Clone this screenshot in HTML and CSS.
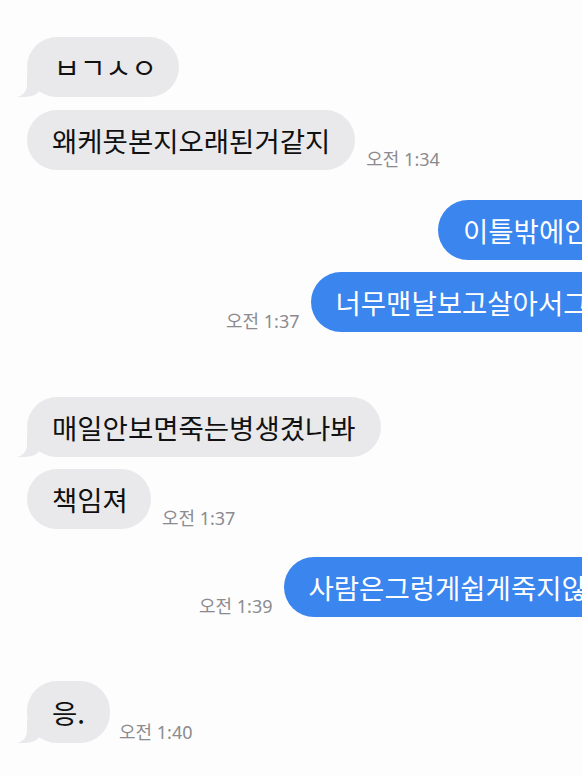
FILE: index.html
```html
<!DOCTYPE html>
<html lang="ko">
<head>
<meta charset="utf-8">
<link rel="stylesheet" href="styles.css">
</head>
<body>
<div class="chat">
  <div class="row in r1"><div class="bubble gray tail jamo">ㅂㄱㅅㅇ</div></div>
  <div class="row in r2"><div class="bubble gray">왜케못본지오래된거같지</div><span class="time">오전 1:34</span></div>
  <div class="row out r3"><div class="bubble blue">이틀밖에안</div></div>
  <div class="row out r4"><span class="time">오전 1:37</span><div class="bubble blue">너무맨날보고살아서그</div></div>
  <div class="row in r5"><div class="bubble gray tail">매일안보면죽는병생겼나봐</div></div>
  <div class="row in r6"><div class="bubble gray">책임져</div><span class="time">오전 1:37</span></div>
  <div class="row out r7"><span class="time">오전 1:39</span><div class="bubble blue">사람은그렁게쉽게죽지않</div></div>
  <div class="row in r8"><div class="bubble gray tail">응.</div><span class="time">오전 1:40</span></div>
</div>
</body>
</html>
```
FILE: styles.css
```css
html, body {
  margin: 0;
  padding: 0;
  background: #fdfdfd;
  overflow: hidden;
  width: 582px;
  height: 776px;
}
.chat {
  display: flex;
  flex-direction: column;
  padding-top: 37px;
  font-family: "Noto Sans CJK KR", "Noto Sans", sans-serif;
}
.row {
  display: flex;
  align-items: flex-end;
  gap: 11px;
  white-space: nowrap;
}
.in { padding-left: 27px; }
.r2 { margin-top: 13px; }
.r3 { margin-top: 30px; padding-left: 438px; }
.r4 { margin-top: 12px; padding-left: 226px; }
.r5 { margin-top: 65px; }
.r6 { margin-top: 12px; }
.r6 .bubble { padding: 0 23px 0 25px; }
.r7 { margin-top: 28px; padding-left: 199px; }
.r8 { margin-top: 64px; }
.r8 .time { margin-left: -2px; }
.bubble {
  position: relative;
  height: 60px;
  line-height: 60px;
  padding: 0 25px;
  border-radius: 30px;
  font-size: 27.5px;
  flex-shrink: 0;
}
.jamo {
  font-size: 28px;
  padding: 0 22px 0 27px;
}
.r8 .bubble { height: 62px; line-height: 62px; }
.gray {
  background: #e9e9eb;
  color: #111;
}
.blue {
  background: #3a85ee;
  color: #fff;
}
.tail::before {
  content: "";
  position: absolute;
  bottom: 0;
  left: -10px;
  width: 26px;
  height: 24px;
  background: #e9e9eb;
  border-bottom-right-radius: 17px 15px;
  z-index: 0;
}
.tail::after {
  content: "";
  position: absolute;
  bottom: 0;
  left: -13px;
  width: 13px;
  height: 25px;
  background: #fdfdfd;
  border-bottom-right-radius: 12px;
  z-index: 1;
}
.time {
  font-family: "Noto Sans", "Noto Sans CJK KR", sans-serif;
  font-size: 18px;
  line-height: 20px;
  color: #8b8b8f;
  margin-bottom: 1px;
  flex-shrink: 0;
}
```
